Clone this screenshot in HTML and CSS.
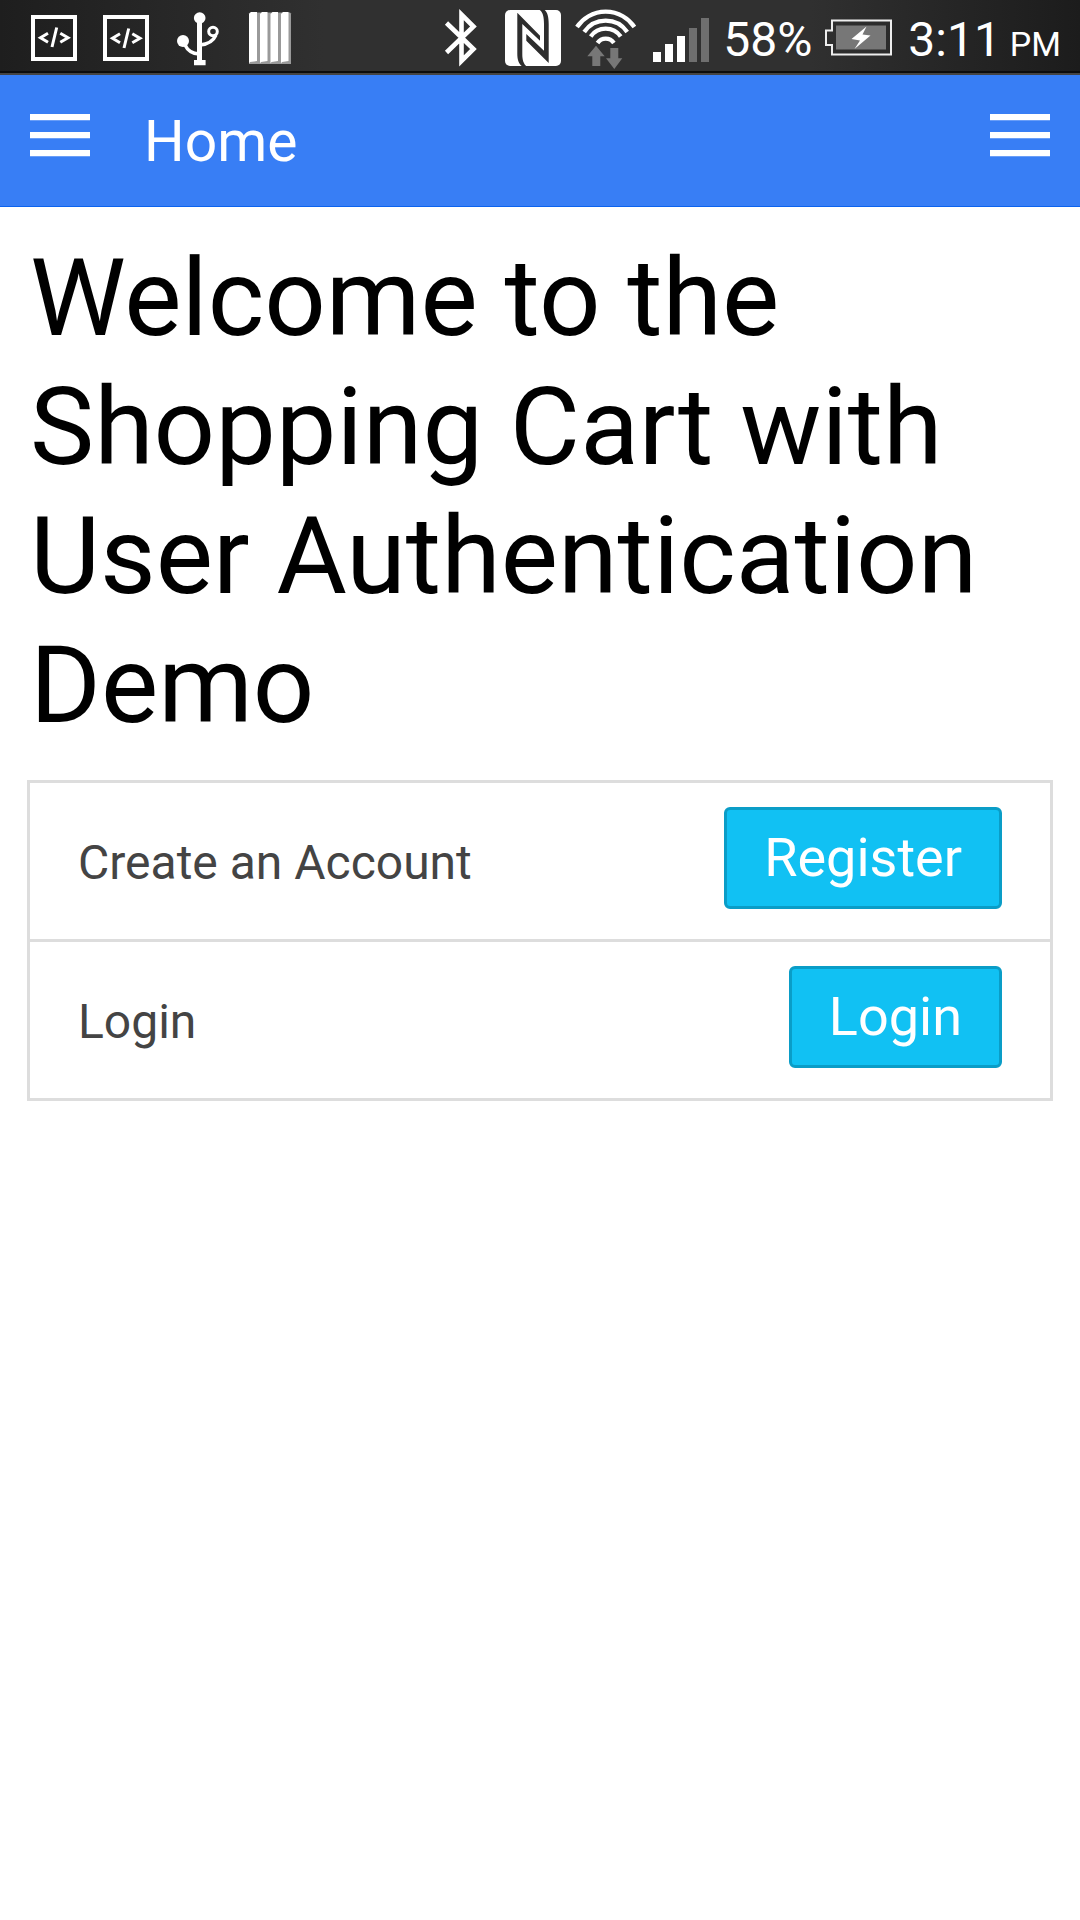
FILE: index.html
```html
<!DOCTYPE html>
<html lang="en">
<head>
<meta charset="utf-8">
<meta name="viewport" content="width=device-width, initial-scale=1">
<title>Home</title>
<link rel="stylesheet" href="styles.css">
</head>
<body>
<div class="status-bar">
  <div class="status-group">
    <svg class="status-icon" viewBox="0 0 72 72" aria-hidden="true">
      <rect x="15" y="17" width="42" height="42" fill="none" stroke="#fff" stroke-width="4"/>
      <path d="M30 33.2L22.5 37.7L30 42.2M38.7 27.5L34 47M42.3 33.2L50 37.7L42.3 42.2" fill="none" stroke="#fff" stroke-width="3"/>
    </svg>
    <svg class="status-icon" viewBox="0 0 72 72" aria-hidden="true">
      <rect x="15" y="17" width="42" height="42" fill="none" stroke="#fff" stroke-width="4"/>
      <path d="M30 33.7L22.5 38.2L30 42.7M38.7 28.5L34 48M42.3 33.7L50 38.2L42.3 42.7" fill="none" stroke="#fff" stroke-width="3"/>
    </svg>
    <svg class="status-icon" viewBox="0 0 72 72" aria-hidden="true">
      <circle cx="37.7" cy="18" r="5.8" fill="#fff"/>
      <circle cx="21" cy="41" r="6" fill="#fff"/>
      <path d="M35 18h5v42h3.600v5.300H32V60h3z" fill="#fff"/>
      <path d="M23 45Q27 53.500 37 54M54 35Q50 44 38 45" fill="none" stroke="#fff" stroke-width="3.400"/>
      <circle cx="51" cy="31.500" r="4.300" fill="none" stroke="#fff" stroke-width="3"/>
    </svg>
    <svg class="status-icon" viewBox="0 0 72 72" aria-hidden="true">
      <path d="M16 12.500h40l1 1V64H15V13.500z" fill="#9a9a9a"/>
      <path d="M15 14l2-2h6v49l-7 1-1 1.500zM26 14l2-2h5.500v49l-6.500 1-1 1.500zM36.500 14l2-2H44v49l-6.500 1-1 1.500zM47 14l2-2h5.500v49l-6.500 1-1 1.500z" fill="#fff"/>
    </svg>
  </div>
  <div class="status-group">
    <svg class="status-icon" viewBox="0 0 72 72" aria-hidden="true">
      <path d="M21.500 23L48.500 49L36.500 61V14.500L48.500 26.500L21.500 52.500" fill="none" stroke="#fff" stroke-width="4.600"/>
    </svg>
    <svg class="status-icon" viewBox="0 0 72 72" aria-hidden="true">
      <rect x="8" y="10" width="56" height="56" rx="5" fill="#fff"/>
      <path d="M20.300 12.700L43 35.700V40.700L25.300 24V54C25.300 60 26.500 63.500 29.500 66.500H25.500C21.500 64 20.300 59 20.300 54ZM29.300 34L47 50.700V24C47 17 46 12 42 9.500H47C50.500 12 51.700 17 51.700 24V63L29.300 40.700Z" fill="#2d2d2d"/>
    </svg>
    <svg class="status-icon" viewBox="0 0 72 72" aria-hidden="true">
      <path d="M8 27A34.500 34.500 0 0 1 65.400 27M15.200 32A26 26 0 0 1 58.200 32M21.700 36.500A18.300 18.300 0 0 1 51.700 36.500M28.500 43A10 10 0 0 1 44.900 43" fill="none" stroke="#fff" stroke-width="4.300"/>
      <path d="M27 45.700L35.700 56.300H31.300V66H23.300V56.300H18.300ZM41.300 48H49.300V58.300H53.300L45.300 69L37 58.300H41.300Z" fill="#777"/>
    </svg>
    <svg class="status-icon signal-icon" viewBox="0 0 72 72" aria-hidden="true">
      <path d="M8 52h8v10H8zM20 44h8v18h-8zM32 36h8v26h-8z" fill="#fff"/>
      <path d="M44 28h8v34h-8zM56 18h8v44h-8z" fill="#6f6f6f"/>
    </svg>
    <span class="status-text battery-level">58%</span>
    <svg class="battery-icon" viewBox="0 0 68 72" aria-hidden="true">
      <path d="M8 20.500H67V54.500H8V45H2V30.500H8Z" fill="none" stroke="#eee" stroke-width="2"/>
      <path d="M12 25.500h50v24H12z" fill="#777"/>
      <path d="M42.500 26.500L27.500 39L36 40.500L30.500 49L46.500 35.500L38.500 34.500Z" fill="#fff"/>
    </svg>
    <span class="status-text clock"><span>3:11</span><span class="meridiem">PM</span></span>
  </div>
</div>

<header class="nav-bar">
  <button class="menu-button" type="button" aria-label="Open left menu"><span class="menu-line"></span><span class="menu-line"></span><span class="menu-line"></span></button>
  <div class="nav-title">Home</div>
  <button class="menu-button" type="button" aria-label="Open right menu"><span class="menu-line"></span><span class="menu-line"></span><span class="menu-line"></span></button>
</header>

<main class="content">
  <h1 class="welcome">Welcome to the Shopping Cart with User Authentication Demo</h1>
  <ul class="list">
    <li class="item"><span>Create an Account</span><button class="button" type="button">Register</button></li>
    <li class="item"><span>Login</span><button class="button" type="button">Login</button></li>
  </ul>
</main>
</body>
</html>
```
FILE: styles.css
```css
* {
  box-sizing: border-box;
}

body {
  margin: 0;
  background: #fff;
  color: #000;
  font-family: Roboto, sans-serif;
}

button {
  margin: 0;
  font-family: inherit;
  cursor: pointer;
}

.status-bar {
  display: flex;
  justify-content: space-between;
  height: 75px;
  padding: 0 19px 0 18px;
  border-bottom: 2px solid #444;
  background: linear-gradient(90deg, #1e1e1e, #303030 30%, #303030 75%, #1c1c1c);
  box-shadow: inset 0 -2px #0c0c0c;
  color: #fff;
}

.status-group {
  display: flex;
}

.status-icon {
  width: 72px;
  height: 72px;
}

.signal-icon {
  margin-left: 4px;
}

.battery-icon {
  width: 68px;
  height: 72px;
}

.status-text {
  font-size: 48px;
  line-height: 80px;
  white-space: nowrap;
}

.battery-level {
  margin: 0 12px 0 6px;
}

.clock {
  display: flex;
  align-items: baseline;
  gap: 9px;
  margin-left: 16px;
}

.meridiem {
  font-size: 34px;
}

.nav-bar {
  display: flex;
  align-items: center;
  height: 132px;
  padding: 0 30px;
  border-bottom: 1px solid #0c63ee;
  background: #387ef5;
  color: #fff;
}

.menu-button {
  display: flex;
  flex-direction: column;
  gap: 12px;
  width: 60px;
  padding: 0 0 12px;
  border: 0;
  background: none;
}

.menu-line {
  height: 6px;
  background: #fff;
  box-shadow: 0 1px #6a9ef8;
}

.nav-title {
  flex: 1;
  padding: 3px 0 0 54px;
  font-size: 57px;
  line-height: 72px;
}

.content {
  padding: 27px;
}

.welcome {
  margin: 0;
  padding: 0 3px;
  font-size: 108px;
  font-weight: 400;
  line-height: 129px;
}

.list {
  margin: 30px 0 0;
  padding: 0;
  border: 3px solid #ddd;
  list-style: none;
}

.item {
  display: flex;
  align-items: center;
  justify-content: space-between;
  padding: 24px 48px 30px;
  color: #444;
  font-size: 48px;
  line-height: 60px;
}

.item span {
  padding-top: 9px;
}

.item + .item {
  border-top: 3px solid #ddd;
}

.button {
  height: 102px;
  padding: 0 37px;
  border: 3px solid #0a9dc7;
  border-radius: 6px;
  background: #11c1f3;
  color: #fff;
  font-size: 54px;
  line-height: 96px;
}
```
